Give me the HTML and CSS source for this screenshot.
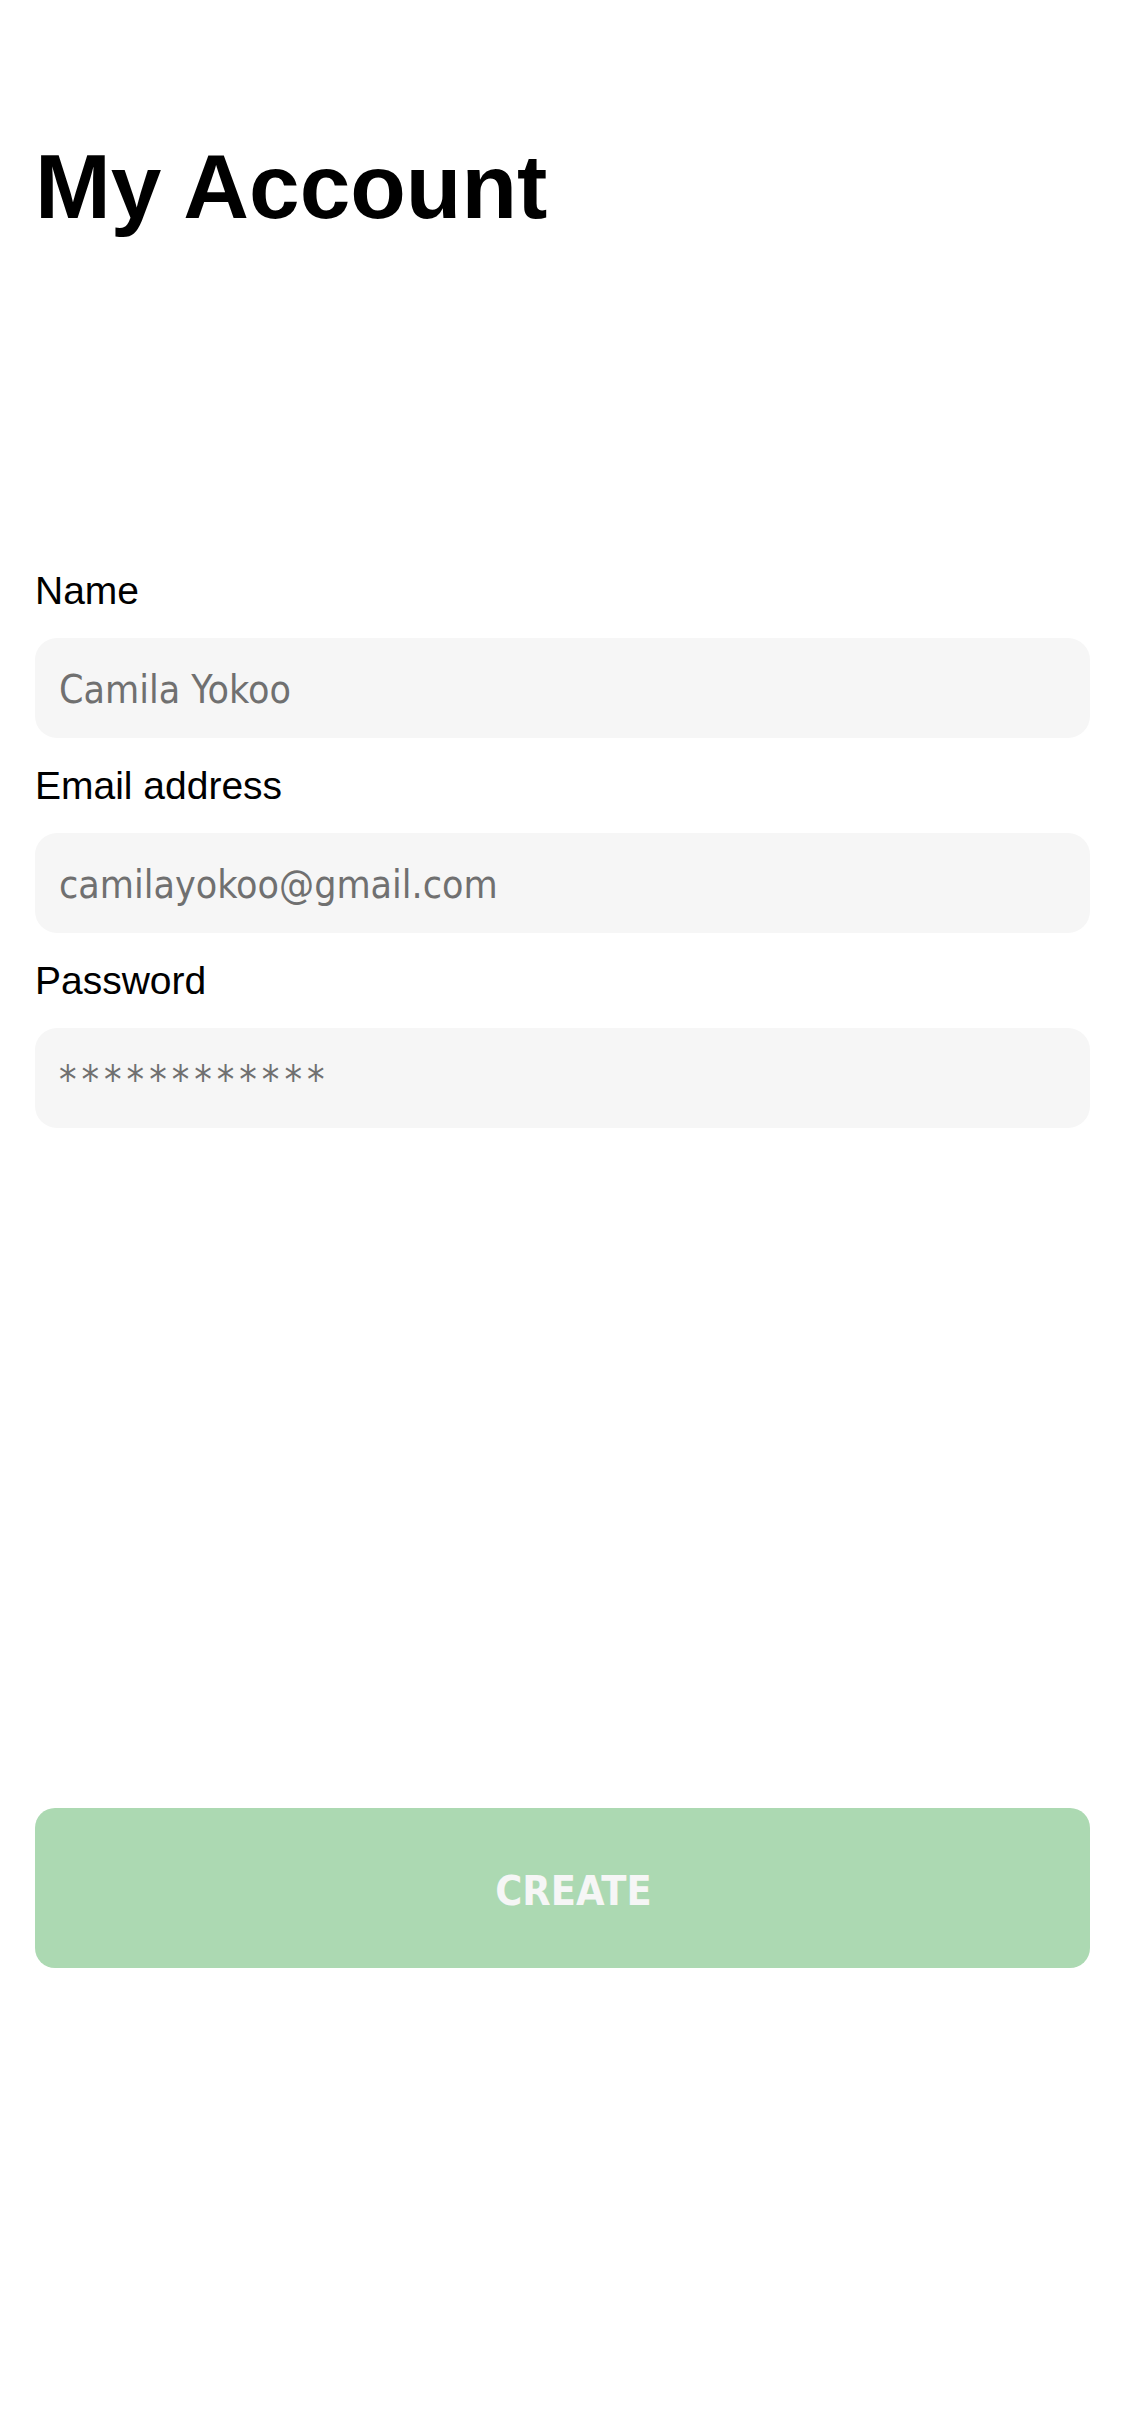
FILE: index.html
```html
<!DOCTYPE html>
<html lang="en">
<head>
<meta charset="utf-8">
<title>My Account</title>
<link rel="stylesheet" href="styles.css">
</head>
<body>
<main class="page">
  <h1 class="title">My Account</h1>
  <form class="form">
    <div class="group">
      <label class="label">Name</label>
      <div class="field">Camila Yokoo</div>
    </div>
    <div class="group">
      <label class="label">Email address</label>
      <div class="field">camilayokoo@gmail.com</div>
    </div>
    <div class="group">
      <label class="label">Password</label>
      <div class="field field-password">************</div>
    </div>
  </form>
  <button class="create" type="button">CREATE</button>
</main>
</body>
</html>
```

FILE: styles.css
```css
html, body {
  margin: 0;
  padding: 0;
  background: #ffffff;
}

body {
  font-family: "Liberation Sans", Arial, sans-serif;
  color: #000;
}

.page {
  width: 1055px;
  padding: 135px 0 0 35px;
  display: flex;
  flex-direction: column;
}

.title {
  margin: 0;
  font-size: 91px;
  line-height: 104px;
  font-weight: 700;
}

.form {
  margin-top: 330px;
  display: flex;
  flex-direction: column;
  gap: 26px;
}

.group {
  display: flex;
  flex-direction: column;
}

.label {
  font-size: 39px;
  line-height: 44px;
  margin-bottom: 25px;
}

.field {
  height: 100px;
  box-sizing: border-box;
  padding: 4px 0 0 24px;
  line-height: 96px;
  background: #f6f6f6;
  border-radius: 22px;
  font-family: "DejaVu Sans Condensed", "DejaVu Sans", sans-serif;
  font-stretch: condensed;
  font-size: 39px;
  color: #707070;
}

.field-password {
  letter-spacing: 5px;
}

.create {
  margin-top: 680px;
  height: 160px;
  box-sizing: border-box;
  border: none;
  border-radius: 20px;
  background: #acd9b2;
  color: #f6f6f6;
  font-family: "DejaVu Sans Condensed", "DejaVu Sans", sans-serif;
  font-stretch: condensed;
  font-weight: 700;
  font-size: 41px;
  padding: 5px 0 0 22px;
  cursor: pointer;
}
```
